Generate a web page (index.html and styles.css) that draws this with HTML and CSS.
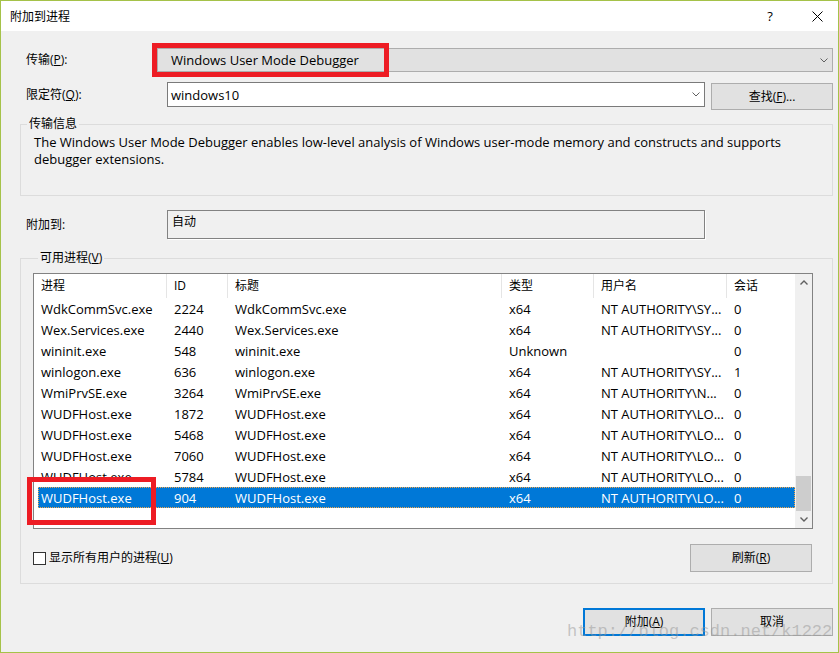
FILE: index.html
```html
<!DOCTYPE html>
<html lang="zh-CN">
<head>
<meta charset="utf-8">
<title>附加到进程</title>
<link rel="stylesheet" href="styles.css">
</head>
<body>
<div class="window">
  <div class="titlebar">
    <span class="title">附加到进程</span>
    <span class="tb-btn tb-help">?</span>
    <span class="tb-btn tb-close"><svg width="11" height="11" viewBox="0 0 11 11"><path d="M0.5 0.5 L10.5 10.5 M10.5 0.5 L0.5 10.5" stroke="#000" stroke-width="1" fill="none"/></svg></span>
  </div>
  <div class="content">
    <div class="row row-transport">
      <span class="lbl lbl-wide1">传输(<u>P</u>):</span>
      <div class="combo">
        <span class="combo-text">Windows User Mode Debugger</span>
        <svg class="chev" width="8" height="5" viewBox="0 0 8 5"><path d="M0.5 0.5 L4 4 L7.5 0.5" stroke="#606060" stroke-width="1" fill="none"/></svg>
      </div>
    </div>
    <div class="row row-qual">
      <span class="lbl lbl-wide2">限定符(<u>Q</u>):</span>
      <div class="input">
        <span class="combo-text">windows10</span>
        <svg class="chev" width="8" height="5" viewBox="0 0 8 5"><path d="M0.5 0.5 L4 4 L7.5 0.5" stroke="#606060" stroke-width="1" fill="none"/></svg>
      </div>
      <button class="btn btn-find"><span>查找(<u>F</u>)...</span></button>
    </div>
    <div class="group group-info">
      <span class="legend legend-info">传输信息</span>
      <p class="desc">The Windows User Mode Debugger enables low-level analysis of Windows user-mode memory and constructs and supports debugger extensions.</p>
    </div>
    <div class="row row-attach">
      <span class="lbl lbl-wide2">附加到:</span>
      <div class="attach-box">自动</div>
    </div>
    <div class="group group-proc">
      <span class="legend legend-proc">可用进程(<u>V</u>)</span>
      <div class="listview">
        <div class="lv-main">
          <div class="lv-head">
            <span class="hcell">进程</span>
            <span class="hcell">ID</span>
            <span class="hcell">标题</span>
            <span class="hcell">类型</span>
            <span class="hcell">用户名</span>
            <span class="hcell hcell-last">会话</span>
          </div>
          <div class="lv-row"><span class="cell">WdkCommSvc.exe</span><span class="cell">2224</span><span class="cell">WdkCommSvc.exe</span><span class="cell">x64</span><span class="cell">NT AUTHORITY\SY...</span><span class="cell">0</span></div>
          <div class="lv-row"><span class="cell">Wex.Services.exe</span><span class="cell">2440</span><span class="cell">Wex.Services.exe</span><span class="cell">x64</span><span class="cell">NT AUTHORITY\SY...</span><span class="cell">0</span></div>
          <div class="lv-row"><span class="cell">wininit.exe</span><span class="cell">548</span><span class="cell">wininit.exe</span><span class="cell">Unknown</span><span class="cell"></span><span class="cell">0</span></div>
          <div class="lv-row"><span class="cell">winlogon.exe</span><span class="cell">636</span><span class="cell">winlogon.exe</span><span class="cell">x64</span><span class="cell">NT AUTHORITY\SY...</span><span class="cell">1</span></div>
          <div class="lv-row"><span class="cell">WmiPrvSE.exe</span><span class="cell">3264</span><span class="cell">WmiPrvSE.exe</span><span class="cell">x64</span><span class="cell">NT AUTHORITY\N...</span><span class="cell">0</span></div>
          <div class="lv-row"><span class="cell">WUDFHost.exe</span><span class="cell">1872</span><span class="cell">WUDFHost.exe</span><span class="cell">x64</span><span class="cell">NT AUTHORITY\LO...</span><span class="cell">0</span></div>
          <div class="lv-row"><span class="cell">WUDFHost.exe</span><span class="cell">5468</span><span class="cell">WUDFHost.exe</span><span class="cell">x64</span><span class="cell">NT AUTHORITY\LO...</span><span class="cell">0</span></div>
          <div class="lv-row"><span class="cell">WUDFHost.exe</span><span class="cell">7060</span><span class="cell">WUDFHost.exe</span><span class="cell">x64</span><span class="cell">NT AUTHORITY\LO...</span><span class="cell">0</span></div>
          <div class="lv-row"><span class="cell">WUDFHost.exe</span><span class="cell">5784</span><span class="cell">WUDFHost.exe</span><span class="cell">x64</span><span class="cell">NT AUTHORITY\LO...</span><span class="cell">0</span></div>
          <div class="lv-row selected"><span class="cell">WUDFHost.exe</span><span class="cell">904</span><span class="cell">WUDFHost.exe</span><span class="cell">x64</span><span class="cell">NT AUTHORITY\LO...</span><span class="cell">0</span></div>
        </div>
        <div class="scrollbar">
          <div class="sb-btn"><svg width="8" height="5" viewBox="0 0 8 5"><path d="M0.5 4.5 L4 1 L7.5 4.5" stroke="#606060" stroke-width="1.4" fill="none"/></svg></div>
          <div class="sb-track"><div class="sb-thumb"></div></div>
          <div class="sb-btn"><svg width="8" height="5" viewBox="0 0 8 5"><path d="M0.5 0.5 L4 4 L7.5 0.5" stroke="#606060" stroke-width="1.4" fill="none"/></svg></div>
        </div>
      </div>
      <div class="proc-footer">
        <label class="check"><span class="check-box"></span><span class="check-text">显示所有用户的进程(<u>U</u>)</span></label>
        <button class="btn"><span>刷新(<u>R</u>)</span></button>
      </div>
    </div>
    <div class="dialog-buttons">
      <button class="btn btn-dlg btn-primary"><span>附加(<u>A</u>)</span></button>
      <button class="btn btn-dlg"><span>取消</span></button>
    </div>
  </div>
  <div class="redbox redbox-transport"></div>
  <div class="redbox redbox-row"></div>
  <div class="watermark">http://blog.csdn.net/k1222</div>
</div>
</body>
</html>
```

FILE: styles.css
```css
* { box-sizing: border-box; }
html, body { margin: 0; padding: 0; }
body {
  width: 839px;
  height: 653px;
  overflow: hidden;
  background: #f0f0f0;
  font-family: "Open Sans", "Noto Sans CJK SC", sans-serif;
  font-size: 12px;
  color: #000;
}
u { text-decoration: underline; text-underline-offset: 1px; }

.window {
  position: relative;
  width: 839px;
  height: 653px;
  border: 1px solid #a5c249;
  background: #f0f0f0;
  display: flex;
  flex-direction: column;
}

.titlebar {
  height: 30px;
  flex: none;
  background: #fff;
  display: flex;
  align-items: center;
  padding-left: 9px;
}
.title { flex: 1; font-size: 12px; line-height: 16px; font-family: "Noto Sans CJK SC", sans-serif; }
.tb-btn { height: 30px; display: flex; align-items: center; justify-content: center; }
.tb-help { width: 52px; font-size: 13px; }
.tb-close { width: 42px; }

.content {
  display: flex;
  flex-direction: column;
  padding: 0 5px 0 19px;
}

.row { display: flex; padding-left: 6px; }
.lbl { flex: none; font-size: 12px; line-height: 16px; }
.lbl-wide1 { width: 131px; }
.lbl-wide2 { width: 141px; }

.row-transport { margin-top: 17px; height: 24px; align-items: center; }
.combo {
  flex: 1;
  height: 24px;
  border: 1px solid #adadad;
  background: #e1e1e1;
  display: flex;
  align-items: center;
  padding: 0 4px 0 13px;
}
.combo-text { font-size: 13px; line-height: 18px; flex: 1; white-space: nowrap; }
.chev { flex: none; }

.row-qual { margin-top: 10px; height: 28px; align-items: flex-start; }
.row-qual .lbl { line-height: 25px; }
.input {
  width: 538px;
  height: 25px;
  border: 1px solid #7a7a7a;
  background: #fff;
  display: flex;
  align-items: center;
  padding: 0 4px 0 3px;
}

.btn {
  width: 122px;
  height: 28px;
  border: 1px solid #adadad;
  background: #e1e1e1;
  font-family: "Open Sans", "Noto Sans CJK SC", sans-serif;
  font-size: 12px;
  line-height: 16px;
  color: #000;
  padding: 0;
  display: flex;
  align-items: center;
  justify-content: center;
}
.btn-find { margin-left: 6px; margin-top: 1px; height: 27px; }
.btn-primary { border: 2px solid #0078d7; }

.group { border: 1px solid #dcdcdc; }
.legend {
  display: block;
  width: max-content;
  margin-top: -9px;
  padding: 0 2px;
  line-height: 16px;
  font-size: 12px;
  background: #f0f0f0;
}
.legend-info { margin-left: 6px; }
.legend-proc { margin-left: 5px; }

.group-info { margin-top: 14px; height: 72px; }
.desc {
  margin: 2px 0 0 13px;
  width: 768px;
  font-size: 13px;
  line-height: 17px;
}

.row-attach { margin-top: 14px; align-items: center; }
.attach-box {
  width: 538px;
  height: 29px;
  border: 1px solid #828282;
  box-shadow: 1px 1px 0 #fff;
  padding: 3px 4px;
  font-size: 12px;
  line-height: 16px;
}

.group-proc { margin-top: 19px; padding: 0 19px 11px 12px; }
.listview {
  margin-top: 7px;
  height: 256px;
  border: 1px solid #828282;
  background: #fff;
  display: flex;
}
.lv-main { flex: 1; display: flex; flex-direction: column; overflow: hidden; }
.lv-head {
  display: grid;
  grid-template-columns: 133px 61px 274px 92px 133px 68px;
  height: 24px;
  flex: none;
}
.hcell {
  border-right: 1px solid #e5e5e5;
  padding-left: 7px;
  font-size: 12px;
  line-height: 24px;
  white-space: nowrap;
}
.hcell-last { border-right: none; }
.lv-row {
  display: grid;
  grid-template-columns: 129px 61px 274px 92px 133px 68px;
  margin-left: 4px;
  height: 21px;
  flex: none;
  font-size: 13px;
  line-height: 22px;
}
.cell { padding-left: 7px; white-space: nowrap; overflow: hidden; }
.lv-row .cell:first-child { padding-left: 3px; }
.lv-row.selected {
  background: #0078d7;
  color: #fff;
  outline: 1px dotted #f3a64a;
  outline-offset: -1px;
}

.scrollbar {
  width: 17px;
  flex: none;
  background: #f0f0f0;
  display: flex;
  flex-direction: column;
}
.sb-btn { height: 17px; flex: none; display: flex; align-items: center; justify-content: center; }
.sb-track { flex: 1; display: flex; flex-direction: column; justify-content: flex-end; padding: 0 1px; }
.sb-thumb { height: 35px; background: #cdcdcd; }

.proc-footer {
  margin-top: 15px;
  margin-right: 1px;
  height: 28px;
  display: flex;
  align-items: center;
  justify-content: space-between;
}
.check { display: flex; align-items: center; gap: 3px; font-size: 12px; line-height: 16px; }
.check-box { width: 13px; height: 13px; border: 1px solid #333; background: #fff; }

.dialog-buttons {
  margin-top: 24px;
  display: flex;
  justify-content: flex-end;
  gap: 6px;
}

.redbox { position: absolute; border: 5px solid #ed1c24; }
.redbox-transport { left: 151px; top: 42px; width: 237px; height: 34px; }
.redbox-row { left: 26px; top: 476px; width: 129px; height: 48px; }

.watermark {
  position: absolute;
  left: 566px;
  top: 621px;
  font-family: "Liberation Mono", monospace;
  font-size: 17px;
  line-height: 20px;
  color: rgba(150, 150, 150, 0.5);
  white-space: nowrap;
}
```
